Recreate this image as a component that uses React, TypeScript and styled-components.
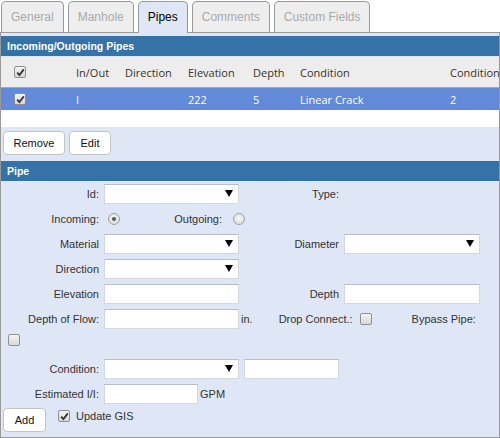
import React from 'react';
import styled, { createGlobalStyle } from 'styled-components';

const GlobalStyle = createGlobalStyle`
  html, body {
    margin: 0;
    padding: 0;
    background: #fff;
  }
  body {
    font-family: "Liberation Sans", Arial, sans-serif;
    font-size: 11px;
    color: #333;
  }
`;

// Layout
const Page = styled.div`
  width: 500px;
  height: 438px;
  display: flex;
  flex-direction: column;
  overflow: hidden;
`;

const TabBar = styled.div`
  display: flex;
  align-items: flex-end;
  gap: 4px;
  height: 32px;
  padding-left: 1px;
  position: relative;
  z-index: 1;
`;

const Tab = styled.div<{ $active?: boolean }>`
  height: ${(p) => (p.$active ? '32px' : '31px')};
  margin-bottom: ${(p) => (p.$active ? '-1px' : '0')};
  box-sizing: border-box;
  padding: 0 9px;
  border: 1px solid #999;
  border-bottom: none;
  border-radius: 5px 5px 0 0;
  background: ${(p) => (p.$active ? '#dfe7f6' : '#eeeeee')};
  color: ${(p) => (p.$active ? '#000' : '#aaa')};
  line-height: 30px;
  font-size: 12px;
  cursor: pointer;
`;

const Panel = styled.div`
  flex: 1;
  width: 500px;
  box-sizing: border-box;
  border: 1px solid #999;
  background: #dfe7f6;
  padding-top: 3px;
  display: flex;
  flex-direction: column;
`;

const SectionHeader = styled.div`
  height: 20px;
  line-height: 20px;
  background: #3572a8;
  color: #fff;
  font-weight: bold;
  font-size: 10.5px;
  padding-left: 6px;
`;

// Grid
const GridWrap = styled.div`
  margin-top: 1px;
  overflow: hidden;
  background: #fff;
  font-family: "Open Sans", "Noto Sans", sans-serif;
  font-size: 11px;
`;

const GridRow = styled.div<{ $variant: 'head' | 'selected' | 'empty' }>`
  display: grid;
  grid-template-columns: 75px 49px 63px 65px 47px 150px 100px;
  align-items: center;
  width: 560px;
  height: ${(p) => (p.$variant === 'head' ? '30px' : p.$variant === 'selected' ? '22px' : '17px')};
  background: ${(p) =>
    p.$variant === 'head' ? '#ededed' : p.$variant === 'selected' ? '#628ad8' : '#fff'};
  color: ${(p) => (p.$variant === 'selected' ? '#fff' : '#3a3226')};
  border-bottom: ${(p) => (p.$variant === 'head' ? '1px solid #a8a8a8' : 'none')};
`;

const CheckCell = styled.div`
  padding-left: 13px;
  display: flex;
  align-items: center;
`;

const Cell = styled.div`
  white-space: nowrap;
  overflow: hidden;
`;

const ButtonBar = styled.div`
  display: flex;
  gap: 4px;
  padding: 4px 2px 6px;
`;

const Button = styled.button<{ $w: number }>`
  width: ${(p) => p.$w}px;
  height: 24px;
  background: #fff;
  border: 1px solid #c4c4c4;
  border-radius: 4px;
  font-family: "Liberation Sans", Arial, sans-serif;
  font-size: 11px;
  color: #111;
  padding: 0;
  cursor: pointer;
`;

// Form
const Form = styled.div`
  display: flex;
  flex-direction: column;
`;

const FormRow = styled.div<{ $top?: boolean; $h?: number }>`
  display: flex;
  align-items: ${(p) => (p.$top ? 'flex-start' : 'center')};
  height: ${(p) => p.$h ?? 25}px;
`;

const Label = styled.div<{ $w?: number; $mr?: number }>`
  width: ${(p) => p.$w ?? 98}px;
  margin-right: ${(p) => p.$mr ?? 5}px;
  text-align: right;
  white-space: nowrap;
  flex-shrink: 0;
`;

const TextInput = styled.div<{ $w: number; $ml?: number }>`
  width: ${(p) => p.$w}px;
  height: 20px;
  margin-left: ${(p) => p.$ml ?? 0}px;
  box-sizing: border-box;
  background: #fff;
  border: 1px solid #d3d8e0;
  border-top-color: #b9bec6;
  flex-shrink: 0;
`;

const SelectBox = styled(TextInput)`
  display: flex;
  align-items: center;
  justify-content: flex-end;
  padding-right: 5px;
`;

const Arrow = styled.span`
  width: 0;
  height: 0;
  border-left: 4px solid transparent;
  border-right: 4px solid transparent;
  border-top: 7px solid #000;
`;

const Text = styled.span<{ $ml?: number }>`
  margin-left: ${(p) => p.$ml ?? 0}px;
  white-space: nowrap;
`;

const Box = styled.span<{ $ml?: number; $mt?: number }>`
  display: inline-flex;
  align-items: center;
  justify-content: center;
  width: 12px;
  height: 12px;
  box-sizing: border-box;
  margin-left: ${(p) => p.$ml ?? 0}px;
  margin-top: ${(p) => p.$mt ?? 0}px;
  border: 1px solid #8f8f8f;
  border-radius: 2px;
  background: linear-gradient(#f4f4f4, #d8d8d8);
  flex-shrink: 0;
`;

const Radio = styled(Box)<{ $on?: boolean }>`
  border-radius: 50%;
  border-color: #a0a0a0;
  background: radial-gradient(circle at 50% 40%, #f8f8f8, #d4d4d4);
  &::after {
    content: '';
    display: ${(p) => (p.$on ? 'block' : 'none')};
    width: 4px;
    height: 4px;
    border-radius: 50%;
    background: #555;
  }
`;

const AddRow = styled.div`
  display: flex;
  align-items: flex-start;
  padding: 2px 2px 0;
`;

function CheckBox({ checked, ml, mt }: { checked?: boolean; ml?: number; mt?: number }) {
  return (
    <Box $ml={ml} $mt={mt}>
      {checked && (
        <svg width="9" height="9" viewBox="0 0 9 9">
          <path d="M1.2 4.6 L3.4 7 L7.8 1.4" fill="none" stroke="#333" strokeWidth="1.8" />
        </svg>
      )}
    </Box>
  );
}

function Select({ w, ml }: { w: number; ml?: number }) {
  return (
    <SelectBox $w={w} $ml={ml}>
      <Arrow />
    </SelectBox>
  );
}

const tabs = ['General', 'Manhole', 'Pipes', 'Comments', 'Custom Fields'];

export default function App() {
  const pipes = [{ io: 'I', direction: '', elevation: '222', depth: '5', condition: 'Linear Crack', rating: '2' }];

  return (
    <Page>
      <GlobalStyle />
      <TabBar>
        {tabs.map((t) => (
          <Tab key={t} $active={t === 'Pipes'}>
            {t}
          </Tab>
        ))}
      </TabBar>
      <Panel>
        <SectionHeader>Incoming/Outgoing Pipes</SectionHeader>
        <GridWrap>
          <GridRow $variant="head">
            <CheckCell>
              <CheckBox checked />
            </CheckCell>
            <Cell>In/Out</Cell>
            <Cell>Direction</Cell>
            <Cell>Elevation</Cell>
            <Cell>Depth</Cell>
            <Cell>Condition</Cell>
            <Cell>Condition Rating</Cell>
          </GridRow>
          {pipes.map((p, i) => (
            <GridRow key={i} $variant="selected">
              <CheckCell>
                <CheckBox checked />
              </CheckCell>
              <Cell>{p.io}</Cell>
              <Cell>{p.direction}</Cell>
              <Cell>{p.elevation}</Cell>
              <Cell>{p.depth}</Cell>
              <Cell>{p.condition}</Cell>
              <Cell>{p.rating}</Cell>
            </GridRow>
          ))}
          <GridRow $variant="empty" />
        </GridWrap>
        <ButtonBar>
          <Button $w={62}>Remove</Button>
          <Button $w={42}>Edit</Button>
        </ButtonBar>

        <SectionHeader>Pipe</SectionHeader>
        <Form>
          <FormRow>
            <Label>Id:</Label>
            <Select w={135} />
            <Label $w={100}>Type:</Label>
          </FormRow>
          <FormRow>
            <Label>Incoming:</Label>
            <Radio $ml={4} $on />
            <Label $w={102} $mr={11}>Outgoing:</Label>
            <Radio />
          </FormRow>
          <FormRow>
            <Label>Material</Label>
            <Select w={135} />
            <Label $w={100}>Diameter</Label>
            <Select w={136} />
          </FormRow>
          <FormRow>
            <Label>Direction</Label>
            <Select w={135} />
          </FormRow>
          <FormRow>
            <Label>Elevation</Label>
            <TextInput $w={135} />
            <Label $w={100}>Depth</Label>
            <TextInput $w={136} />
          </FormRow>
          <FormRow>
            <Label>Depth of Flow:</Label>
            <TextInput $w={135} />
            <Text $ml={2}>in.</Text>
            <Text $ml={26}>Drop Connect.:</Text>
            <CheckBox ml={7} />
            <Text $ml={40}>Bypass Pipe:</Text>
          </FormRow>
          <FormRow $top>
            <CheckBox ml={7} mt={3} />
          </FormRow>
          <FormRow>
            <Label>Condition:</Label>
            <Select w={135} />
            <TextInput $w={95} $ml={5} />
          </FormRow>
          <FormRow>
            <Label>Estimated I/I:</Label>
            <TextInput $w={94} />
            <Text $ml={2}>GPM</Text>
          </FormRow>
          <AddRow>
            <Button $w={43}>Add</Button>
            <CheckBox checked ml={12} mt={2} />
            <Text $ml={6} style={{ lineHeight: '16px' }}>Update GIS</Text>
          </AddRow>
        </Form>
      </Panel>
    </Page>
  );
}
